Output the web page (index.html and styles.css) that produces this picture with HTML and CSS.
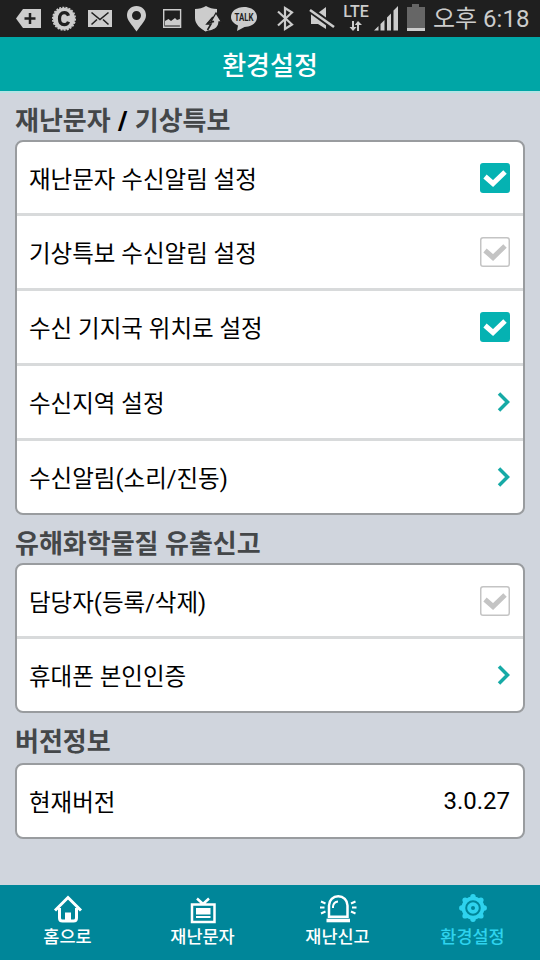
FILE: index.html
```html
<!DOCTYPE html>
<html lang="ko">
<head>
  <meta charset="UTF-8" />
  <meta name="viewport" content="width=device-width, initial-scale=1.0" />
  <title>환경설정</title>
  <link rel="stylesheet" href="styles.css">
</head>
<body>
  <div class="status-bar">
    <div class="notifications">
      <svg viewBox="0 0 36 37"><path d="M6 18.500L13 9H31V28H13Z"/><path class="cut" d="M20 13v11M14.500 18.500h11"/></svg>
      <svg viewBox="0 0 36 37"><circle cx="18" cy="18.700" r="11"/><circle class="teeth" cx="18" cy="18.700" r="11.300"/><path class="cut thick" d="M22.500 15.700c-.7-2-2.200-3-4.200-3-3 0-4.800 2.300-4.800 6s1.800 6 4.800 6c2 0 3.500-1 4.200-3"/></svg>
      <svg viewBox="0 0 36 37"><path d="M6 10H30V27H6Z"/><path class="cut thin" d="M9.500 12.500l8.500 7 8.500-7M9.500 24.500l5.500-5M26.500 24.500l-5.500-5"/></svg>
      <svg viewBox="0 0 36 37"><path fill-rule="evenodd" d="M18.500 6C13 6 9 10 9 15.300c0 5.200 4.500 9 9.500 16.200C23.500 24.300 28 20.500 28 15.300 28 10 24 6 18.500 6Zm0 5a4.500 4.500 0 1 1 0 9 4.500 4.500 0 0 1 0-9Z"/></svg>
      <svg viewBox="0 0 36 37"><path class="line" d="M9.700 9.700H26.600V27.300H9.700Z"/><path d="M11 25.500V21l3.500-2 2.500 2 4-3 2 2 3-1v6.500Z"/></svg>
      <svg viewBox="0 0 36 37"><path d="M16 6c3 2 7 3 11 3v9c0 6-5 10.500-11 13.500C10 28.500 5 24 5 18V9c4 0 8-1 11-3Z"/><path class="arrow" d="M16 31.500l2-8.500 6-1.500h-3L26 13l5.500 9H29c0 6-6 9.500-13 9.500Z"/><path d="M15.500 31.500c4-1.500 4-3 4-7l-5-1.500-2 6Z"/><path class="cut thin" d="M23 17l-6 7h4l-3.500 6"/></svg>
      <svg viewBox="0 0 36 37"><path d="M18 7c7.500 0 13 4.200 13 10s-5.500 10-12.500 10L11 31l1-5.500C8 23.800 5 21 5 17 5 11.200 10.500 7 18 7Z"/><text x="18" y="20.700" textLength="19" lengthAdjust="spacingAndGlyphs">TALK</text></svg>
    </div>
    <div class="system">
      <svg class="bluetooth" viewBox="0 0 36 37"><path class="line bold" d="M10 11.500l14 13-7 4.500V8l7 4.500-14 13"/></svg>
      <svg class="mute" viewBox="0 0 34 37"><path d="M7 13h7l8-6v22l-8-5H7Z"/><path class="gap" d="M5 9l26 19"/><path class="line slash" d="M6 10l24 17"/></svg>
      <div class="lte">
        <span>LTE</span>
        <svg viewBox="0 0 14 10"><path d="M3 0h2v6h2.500L4 10 .5 6H3ZM10 10h-2V4H5.800L9 0l4 4h-3Z"/></svg>
      </div>
      <svg class="signal" viewBox="0 0 24 25"><path d="M0 24.500L4.500 20v4.500ZM6.500 18l4-4v10.500h-4ZM13 11.500l4-4v17h-4ZM19.500 4.500L24 0v24.500h-4.500Z"/></svg>
      <svg class="battery" viewBox="0 0 18 27"><path class="empty" d="M5 0h7v3h6v21H0V3h5Z"/><path d="M0 24h18v3H0Z"/></svg>
      <span class="time">오후 6:18</span>
    </div>
  </div>

  <header>
    <h1>환경설정</h1>
  </header>

  <main>
    <h2>재난문자 <b>/</b> 기상특보</h2>
    <ul class="card">
      <li>재난문자 수신알림 설정 <svg class="check on" viewBox="0 0 30 30"><path d="M5 13.500l8 7L25 9"/></svg></li>
      <li>기상특보 수신알림 설정 <svg class="check" viewBox="0 0 30 30"><path d="M5 13.500l8 7L25 9"/></svg></li>
      <li>수신 기지국 위치로 설정 <svg class="check on" viewBox="0 0 30 30"><path d="M5 13.500l8 7L25 9"/></svg></li>
      <li>수신지역 설정 <svg class="chevron" viewBox="0 0 14 22"><path d="M3 2.500L11.500 11 3 19.500"/></svg></li>
      <li>수신알림(소리/진동) <svg class="chevron" viewBox="0 0 14 22"><path d="M3 2.500L11.500 11 3 19.500"/></svg></li>
    </ul>

    <h2>유해화학물질 유출신고</h2>
    <ul class="card">
      <li>담당자(등록/삭제) <svg class="check" viewBox="0 0 30 30"><path d="M5 13.500l8 7L25 9"/></svg></li>
      <li>휴대폰 본인인증 <svg class="chevron" viewBox="0 0 14 22"><path d="M3 2.500L11.500 11 3 19.500"/></svg></li>
    </ul>

    <h2 class="version-title">버전정보</h2>
    <ul class="card">
      <li>현재버전 <span class="version">3.0.27</span></li>
    </ul>
  </main>

  <nav>
    <a href="#">
      <svg viewBox="0 0 36 30"><path class="stroke" d="M5 16.500L18 3.500l13 13M9.500 14v10q0 3 3 3h11q3 0 3-3V14"/><path d="M15 18.500h6V28h-6Z"/></svg>
      홈으로
    </a>
    <a href="#">
      <svg viewBox="0 0 36 30"><path class="stroke thin-stroke" d="M7 10.500h22.500v17.500H7ZM12 4.500l6 5.500 6-5.500"/><path d="M11 14h14.500v6.500H11ZM11 22h14.500v2H11Z"/></svg>
      재난문자
    </a>
    <a href="#">
      <svg viewBox="0 0 36 30"><path class="stroke thin-stroke" d="M9 22.800V11.500a9 9 0 0 1 18.500 0v11.300Z"/><path d="M6.500 24.700h23.500v3.600H6.500Z"/><path class="ray" d="M13 14v-1.500q.5-4.500 5-5M1 7.500l4.500 2M0 13.500h4.500M1 19.500l4.500-2M35.500 7.500l-4.500 2M36.500 13.500H32M35.500 19.500l-4.500-2"/></svg>
      재난신고
    </a>
    <a href="#" class="active">
      <svg viewBox="0 0 36 30">
        <circle cx="18" cy="14" r="11.500"/>
        <circle class="bumps" cx="18" cy="14" r="11.200" pathLength="80"/>
        <circle class="ring" cx="18" cy="14" r="6.800"/>
        <circle class="hole" cx="18" cy="14" r="2"/>
      </svg>
      환경설정
    </a>
  </nav>
</body>
</html>
```
FILE: styles.css
```css
* {
  box-sizing: border-box;
}
body {
  margin: 0;
  height: 960px;
  display: flex;
  flex-direction: column;
  overflow: hidden;
  background: #d0d5dd;
  color: #000;
  font-family: Roboto, "Noto Sans CJK KR", sans-serif;
}
svg {
  display: block;
  flex: none;
  overflow: visible;
}

/* status bar */
.status-bar {
  height: 37px;
  flex: none;
  display: flex;
  padding-left: 10px;
  background: #1f1f1f;
  color: #ccc;
  fill: #ccc;
}
.notifications,
.system {
  display: flex;
}
.notifications svg,
.bluetooth {
  width: 36px;
  height: 37px;
}
.notifications text {
  fill: #1f1f1f;
  font-size: 10px;
  font-weight: bold;
  text-anchor: middle;
}
.cut {
  fill: none;
  stroke: #1f1f1f;
  stroke-width: 2.5;
}
.cut.thick {
  stroke-width: 3.2;
}
.cut.thin {
  stroke-width: 1.6;
}
.teeth {
  fill: none;
  stroke: #ccc;
  stroke-width: 1.5;
  stroke-dasharray: 2 1.2;
}
.arrow {
  stroke: #1f1f1f;
  stroke-width: 1.3;
}
.line {
  fill: none;
  stroke: #ccc;
  stroke-width: 1.4;
}
.line.bold {
  stroke-width: 2.2;
}
.line.slash {
  stroke-width: 2.6;
}
.gap {
  fill: none;
  stroke: #1f1f1f;
  stroke-width: 6.5;
}
.system {
  margin-left: 6px;
}
.mute {
  width: 34px;
  height: 37px;
}
.lte {
  width: 36px;
  display: flex;
  flex-direction: column;
  align-items: center;
  padding-top: 4px;
  font-size: 16px;
  font-weight: 500;
  line-height: 16px;
}
.lte svg {
  width: 14px;
  height: 10px;
  margin-top: 1px;
}
.signal {
  width: 24px;
  height: 25px;
  margin-top: 6px;
}
.battery {
  width: 18px;
  height: 27px;
  margin: 4px 8px 0 9px;
}
.battery .empty {
  fill: #666;
}
.time {
  font-size: 24px;
  line-height: 38px;
  white-space: nowrap;
}

/* title */
header {
  height: 56px;
  flex: none;
  background: #00a6a6;
  border-bottom: 2px solid #b5e3e4;
}
h1 {
  margin: 0;
  color: #fff;
  font-size: 26px;
  font-weight: 500;
  line-height: 59px;
  text-align: center;
}

/* settings */
main {
  flex: 1;
  padding: 0 15px;
}
h2 {
  height: 48px;
  margin: 0;
  color: #444749;
  font-size: 26px;
  font-weight: 700;
  line-height: 58px;
  white-space: nowrap;
}
h2:first-child {
  height: 47px;
  line-height: 56px;
  word-spacing: 1px;
}
h2 b {
  color: #000;
}
.version-title {
  height: 50px;
}
.card {
  margin: 0;
  padding: 0;
  list-style: none;
  background: #fff;
  border: 2px solid #999c9f;
  border-radius: 8px;
}
.card li {
  height: 75px;
  display: flex;
  align-items: center;
  justify-content: space-between;
  padding: 0 13px 0 12px;
  border-bottom: 3px solid #d8dadb;
  font-size: 23.5px;
}
.card li:first-child {
  height: 74px;
}
.card li:last-child {
  height: 72px;
  border-bottom: 0;
}
.check {
  width: 30px;
  height: 30px;
  border-radius: 3px;
  box-shadow: inset 0 0 0 1.5px #c4c4c4;
  fill: none;
  stroke: #c4c4c4;
  stroke-width: 5;
}
.check.on {
  background: #05b2b2;
  box-shadow: none;
  stroke: #fff;
}
.chevron {
  width: 14px;
  height: 22px;
  fill: none;
  stroke: #16aaa6;
  stroke-width: 3.5;
}
.version {
  font-size: 24px;
}

/* bottom tabs */
nav {
  height: 75px;
  flex: none;
  display: flex;
  background: #008699;
}
nav a {
  width: 135px;
  display: flex;
  flex-direction: column;
  align-items: center;
  padding-top: 9px;
  color: #fff;
  fill: currentColor;
  font-size: 17.5px;
  font-weight: 500;
  line-height: 27px;
  text-decoration: none;
}
nav svg {
  width: 36px;
  height: 30px;
}
nav .active {
  color: #2ed3ee;
}
.stroke,
.ray {
  fill: none;
  stroke: currentColor;
  stroke-width: 3;
}
.thin-stroke {
  stroke-width: 2.5;
}
.ray {
  stroke-width: 2;
}
.bumps {
  fill: none;
  stroke: currentColor;
  stroke-width: 5.4;
  stroke-linecap: round;
  stroke-dasharray: 0 10;
}
.ring {
  fill: none;
  stroke: #008699;
  stroke-width: 2;
}
.hole {
  fill: #008699;
}
```
